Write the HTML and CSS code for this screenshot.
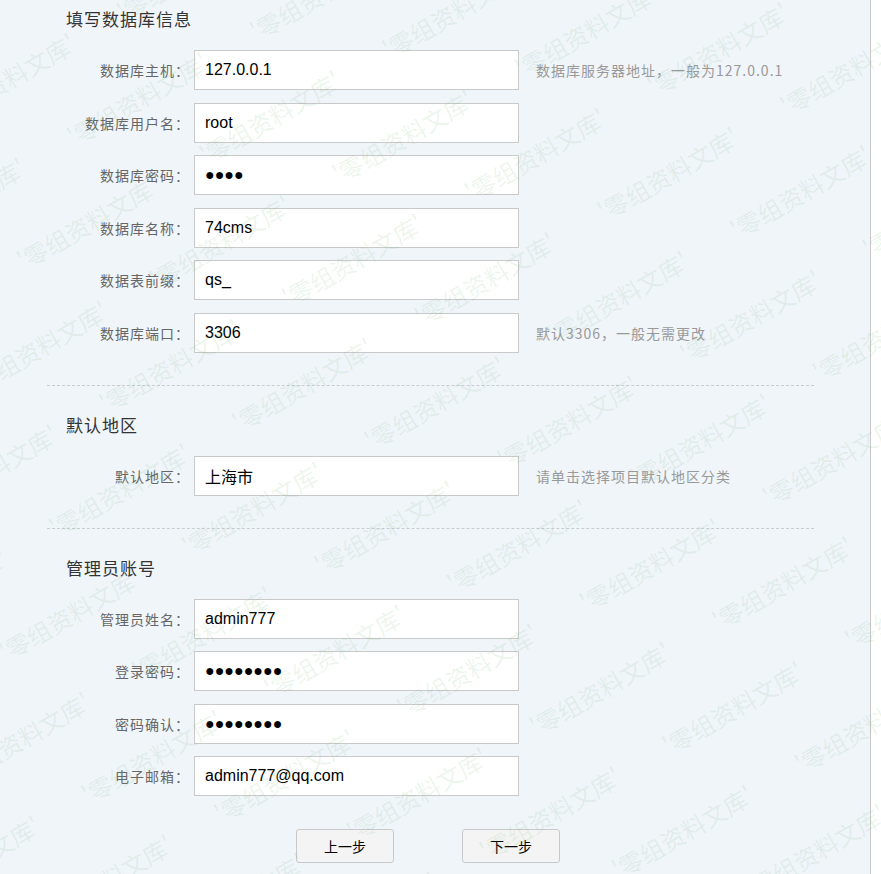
FILE: index.html
```html
<!DOCTYPE html>
<html lang="zh-CN">
<head>
<meta charset="utf-8">
<title>安装向导</title>
<link rel="stylesheet" href="styles.css">
</head>
<body>
<div class="panel">
  <div class="section">
    <div class="sec-title">填写数据库信息</div>
    <div class="row"><label class="label">数据库主机：</label><input class="input" type="text" value="127.0.0.1"><span class="hint">数据库服务器地址，一般为127.0.0.1</span></div>
    <div class="row"><label class="label">数据库用户名：</label><input class="input" type="text" value="root"></div>
    <div class="row"><label class="label">数据库密码：</label><input class="input" type="text" value="●●●●"></div>
    <div class="row"><label class="label">数据库名称：</label><input class="input" type="text" value="74cms"></div>
    <div class="row"><label class="label">数据表前缀：</label><input class="input" type="text" value="qs_"></div>
    <div class="row"><label class="label">数据库端口：</label><input class="input" type="text" value="3306"><span class="hint">默认3306，一般无需更改</span></div>
  </div>
  <div class="sep"></div>
  <div class="section">
    <div class="sec-title">默认地区</div>
    <div class="row"><label class="label">默认地区：</label><input class="input" type="text" value="上海市"><span class="hint">请单击选择项目默认地区分类</span></div>
  </div>
  <div class="sep"></div>
  <div class="section">
    <div class="sec-title">管理员账号</div>
    <div class="row"><label class="label">管理员姓名：</label><input class="input" type="text" value="admin777"></div>
    <div class="row"><label class="label">登录密码：</label><input class="input" type="text" value="●●●●●●●●"></div>
    <div class="row"><label class="label">密码确认：</label><input class="input" type="text" value="●●●●●●●●"></div>
    <div class="row"><label class="label">电子邮箱：</label><input class="input" type="text" value="admin777@qq.com"></div>
  </div>
  <div class="actions">
    <button class="btn" type="button">上一步</button>
    <button class="btn" type="button">下一步</button>
  </div>
</div>

<div class="wm" aria-hidden="true">
  <div class="wm-inner">
    <div class="wm-row"><span>'零组资料文库'</span><span>'零组资料文库'</span><span>'零组资料文库'</span><span>'零组资料文库'</span><span>'零组资料文库'</span><span>'零组资料文库'</span><span>'零组资料文库'</span><span>'零组资料文库'</span></div>
    <div class="wm-row odd"><span>'零组资料文库'</span><span>'零组资料文库'</span><span>'零组资料文库'</span><span>'零组资料文库'</span><span>'零组资料文库'</span><span>'零组资料文库'</span><span>'零组资料文库'</span><span>'零组资料文库'</span></div>
    <div class="wm-row"><span>'零组资料文库'</span><span>'零组资料文库'</span><span>'零组资料文库'</span><span>'零组资料文库'</span><span>'零组资料文库'</span><span>'零组资料文库'</span><span>'零组资料文库'</span><span>'零组资料文库'</span></div>
    <div class="wm-row odd"><span>'零组资料文库'</span><span>'零组资料文库'</span><span>'零组资料文库'</span><span>'零组资料文库'</span><span>'零组资料文库'</span><span>'零组资料文库'</span><span>'零组资料文库'</span><span>'零组资料文库'</span></div>
    <div class="wm-row"><span>'零组资料文库'</span><span>'零组资料文库'</span><span>'零组资料文库'</span><span>'零组资料文库'</span><span>'零组资料文库'</span><span>'零组资料文库'</span><span>'零组资料文库'</span><span>'零组资料文库'</span></div>
    <div class="wm-row odd"><span>'零组资料文库'</span><span>'零组资料文库'</span><span>'零组资料文库'</span><span>'零组资料文库'</span><span>'零组资料文库'</span><span>'零组资料文库'</span><span>'零组资料文库'</span><span>'零组资料文库'</span></div>
    <div class="wm-row"><span>'零组资料文库'</span><span>'零组资料文库'</span><span>'零组资料文库'</span><span>'零组资料文库'</span><span>'零组资料文库'</span><span>'零组资料文库'</span><span>'零组资料文库'</span><span>'零组资料文库'</span></div>
    <div class="wm-row odd"><span>'零组资料文库'</span><span>'零组资料文库'</span><span>'零组资料文库'</span><span>'零组资料文库'</span><span>'零组资料文库'</span><span>'零组资料文库'</span><span>'零组资料文库'</span><span>'零组资料文库'</span></div>
    <div class="wm-row"><span>'零组资料文库'</span><span>'零组资料文库'</span><span>'零组资料文库'</span><span>'零组资料文库'</span><span>'零组资料文库'</span><span>'零组资料文库'</span><span>'零组资料文库'</span><span>'零组资料文库'</span></div>
    <div class="wm-row odd"><span>'零组资料文库'</span><span>'零组资料文库'</span><span>'零组资料文库'</span><span>'零组资料文库'</span><span>'零组资料文库'</span><span>'零组资料文库'</span><span>'零组资料文库'</span><span>'零组资料文库'</span></div>
    <div class="wm-row"><span>'零组资料文库'</span><span>'零组资料文库'</span><span>'零组资料文库'</span><span>'零组资料文库'</span><span>'零组资料文库'</span><span>'零组资料文库'</span><span>'零组资料文库'</span><span>'零组资料文库'</span></div>
    <div class="wm-row odd"><span>'零组资料文库'</span><span>'零组资料文库'</span><span>'零组资料文库'</span><span>'零组资料文库'</span><span>'零组资料文库'</span><span>'零组资料文库'</span><span>'零组资料文库'</span><span>'零组资料文库'</span></div>
    <div class="wm-row"><span>'零组资料文库'</span><span>'零组资料文库'</span><span>'零组资料文库'</span><span>'零组资料文库'</span><span>'零组资料文库'</span><span>'零组资料文库'</span><span>'零组资料文库'</span><span>'零组资料文库'</span></div>
    <div class="wm-row odd"><span>'零组资料文库'</span><span>'零组资料文库'</span><span>'零组资料文库'</span><span>'零组资料文库'</span><span>'零组资料文库'</span><span>'零组资料文库'</span><span>'零组资料文库'</span><span>'零组资料文库'</span></div>
    <div class="wm-row"><span>'零组资料文库'</span><span>'零组资料文库'</span><span>'零组资料文库'</span><span>'零组资料文库'</span><span>'零组资料文库'</span><span>'零组资料文库'</span><span>'零组资料文库'</span><span>'零组资料文库'</span></div>
    <div class="wm-row odd"><span>'零组资料文库'</span><span>'零组资料文库'</span><span>'零组资料文库'</span><span>'零组资料文库'</span><span>'零组资料文库'</span><span>'零组资料文库'</span><span>'零组资料文库'</span><span>'零组资料文库'</span></div>
  </div>
</div>
</body>
</html>
```

FILE: styles.css
```css
html, body {
  margin: 0;
  height: 100%;
}

body {
  position: relative;
  overflow: hidden;
  background: #ffffff;
  font-family: "Noto Sans CJK SC", sans-serif;
}

.panel {
  width: 870px;
  min-height: 874px;
  background: #f0f5fa;
  border-right: 1px solid #c8c8c8;
}

.section {
  padding-bottom: 32.5px;
}

.sep + .section {
  padding-top: 19.5px;
}

.sec-title {
  height: 37.5px;
  line-height: 37.5px;
  padding-left: 66px;
  font-size: 17px;
  letter-spacing: 1px;
  color: #333333;
}

.row {
  display: flex;
  align-items: center;
  height: 40px;
  margin-top: 12.5px;
}

.label {
  flex: none;
  width: 190px;
  text-align: right;
  font-size: 14px;
  letter-spacing: 1px;
  color: #666666;
}

.input {
  flex: none;
  box-sizing: border-box;
  width: 325px;
  height: 40px;
  margin: 0 0 0 4px;
  padding: 0 10px;
  border: 1px solid #c9c9c9;
  border-radius: 0;
  background: #ffffff;
  font-family: "Liberation Sans", Arial, "Noto Sans CJK SC", sans-serif;
  font-size: 16px;
  color: #000000;
  outline: none;
}

.hint {
  margin-left: 17px;
  font-size: 14px;
  letter-spacing: 1px;
  color: #999999;
  white-space: nowrap;
}

.sep {
  width: 767px;
  margin-left: 47px;
  border-top: 1px dashed #c8cdd2;
}

.actions {
  display: flex;
  gap: 68px;
  padding-left: 296px;
}

.btn {
  box-sizing: border-box;
  width: 98px;
  height: 34px;
  padding: 0;
  border: 1px solid #c8c8c8;
  border-radius: 3px;
  background: #f4f4f4;
  font-family: "Noto Sans CJK SC", sans-serif;
  font-size: 14px;
  color: #000000;
}

.wm {
  position: absolute;
  left: 0;
  top: 0;
  width: 100%;
  height: 100%;
  overflow: hidden;
  pointer-events: none;
}

.wm-inner {
  position: absolute;
  left: 0;
  top: 0;
  width: 1900px;
  transform-origin: 0 0;
  transform: rotate(-30deg) translate(-642px, -51.75px);
}

.wm-row {
  display: flex;
  align-items: center;
  height: 82.5px;
}

.wm-row.odd {
  padding-left: 105.5px;
}

.wm-row span {
  flex: none;
  width: 211px;
  font-size: 24px;
  white-space: nowrap;
  color: rgba(110, 180, 110, 0.12);
}
```
